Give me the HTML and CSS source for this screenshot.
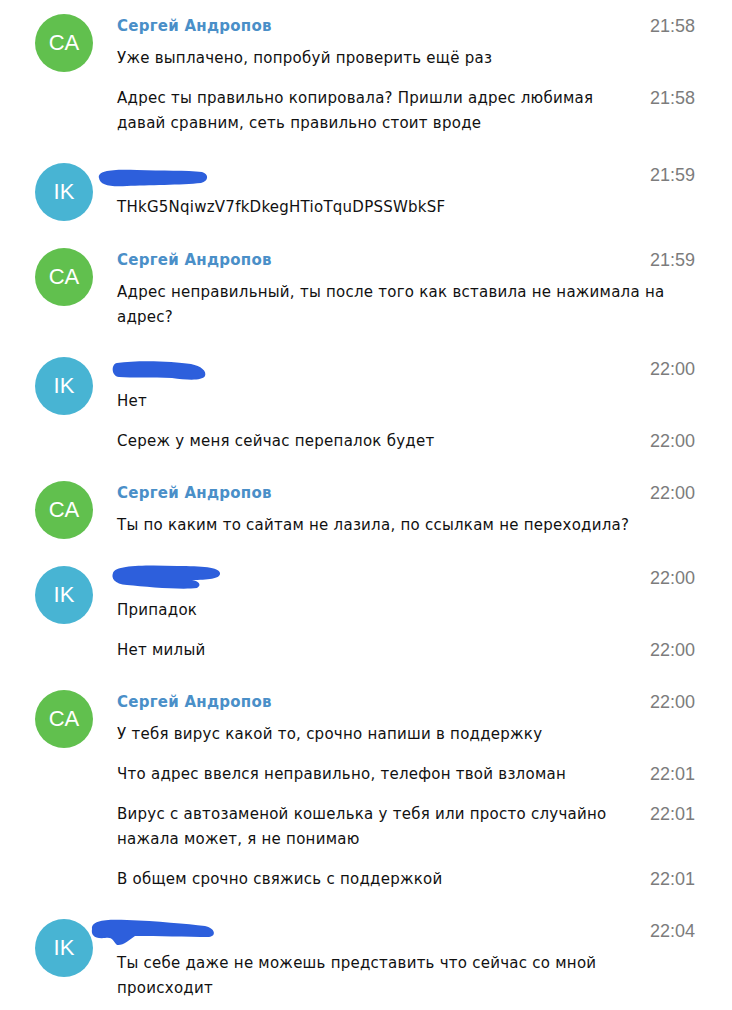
FILE: index.html
```html
<!DOCTYPE html>
<html lang="ru">
<head>
    <meta charset="UTF-8">
    <title>Чат</title>
    <link rel="stylesheet" href="styles.css">
</head>
<body>
    <div class="chat">
        <div class="group">
            <div class="avatar ca">CA</div>
            <div class="body">
                <div class="head"><span class="name">Сергей Андропов</span><span class="time">21:58</span></div>
                <div class="msg first"><span class="text">Уже выплачено, попробуй проверить ещё раз</span></div>
                <div class="msg"><span class="text">Адрес ты правильно копировала? Пришли адрес любимая давай сравним, сеть правильно стоит вроде</span><span class="time">21:58</span></div>
            </div>
        </div>

        <div class="group">
            <div class="avatar ik">IK</div>
            <div class="body">
                <div class="head">
                    <svg class="scribble" viewBox="0 0 140 30"><path d="M12 17 C10 9 28 8 50 9 C75 10 100 9 115 11 C122 13 122 20 114 22 C95 24 60 24 40 25 C22 26 13 24 12 17 Z"/></svg>
                    <span class="time">21:59</span>
                </div>
                <div class="msg first"><span class="text">THkG5NqiwzV7fkDkegHTioTquDPSSWbkSF</span></div>
            </div>
        </div>

        <div class="group">
            <div class="avatar ca">CA</div>
            <div class="body">
                <div class="head"><span class="name">Сергей Андропов</span><span class="time">21:59</span></div>
                <div class="msg first"><span class="text">Адрес неправильный, ты после того как вставила не нажимала на адрес?</span></div>
            </div>
        </div>

        <div class="group">
            <div class="avatar ik">IK</div>
            <div class="body">
                <div class="head">
                    <svg class="scribble" viewBox="0 0 140 30"><path d="M30 8 C50 5 85 6 104 9 C114 11 120 16 118 21 C115 26 100 25 85 23 C65 22 45 23 32 22 C24 21 24 9 30 8 Z"/></svg>
                    <span class="time">22:00</span>
                </div>
                <div class="msg first"><span class="text">Нет</span></div>
                <div class="msg"><span class="text">Сереж у меня сейчас перепалок будет</span><span class="time">22:00</span></div>
            </div>
        </div>

        <div class="group">
            <div class="avatar ca">CA</div>
            <div class="body">
                <div class="head"><span class="name">Сергей Андропов</span><span class="time">22:00</span></div>
                <div class="msg first"><span class="text">Ты по каким то сайтам не лазила, по ссылкам не переходила?</span></div>
            </div>
        </div>

        <div class="group">
            <div class="avatar ik">IK</div>
            <div class="body">
                <div class="head">
                    <svg class="scribble" viewBox="0 0 140 30"><path d="M26 9 C28 1 60 1 90 2 C115 2 132 3 133 9 C134 15 120 16 105 16 C112 17 115 21 110 24 C95 26 60 23 40 21 C27 20 24 14 26 9 Z"/></svg>
                    <span class="time">22:00</span>
                </div>
                <div class="msg first"><span class="text">Припадок</span></div>
                <div class="msg"><span class="text">Нет милый</span><span class="time">22:00</span></div>
            </div>
        </div>

        <div class="group">
            <div class="avatar ca">CA</div>
            <div class="body">
                <div class="head"><span class="name">Сергей Андропов</span><span class="time">22:00</span></div>
                <div class="msg first"><span class="text">У тебя вирус какой то, срочно напиши в поддержку</span></div>
                <div class="msg"><span class="text">Что адрес ввелся неправильно, телефон твой взломан</span><span class="time">22:01</span></div>
                <div class="msg"><span class="text">Вирус с автозаменой кошелька у тебя или просто случайно нажала может, я не понимаю</span><span class="time">22:01</span></div>
                <div class="msg"><span class="text">В общем срочно свяжись с поддержкой</span><span class="time">22:01</span></div>
            </div>
        </div>

        <div class="group">
            <div class="avatar ik">IK</div>
            <div class="body">
                <div class="head">
                    <svg class="scribble" viewBox="0 0 140 30"><path d="M5 12 C4 3 20 2 40 3 C70 4 100 7 118 9 C128 11 130 19 122 20 C100 20 70 19 48 19 C42 23 36 29 30 28 C25 23 26 20 18 21 C7 22 4 18 5 12 Z"/></svg>
                    <span class="time">22:04</span>
                </div>
                <div class="msg first"><span class="text">Ты себе даже не можешь представить что сейчас со мной происходит</span></div>
            </div>
        </div>
    </div>
</body>
</html>
```

FILE: styles.css
```css
body {
    margin: 0;
    background-color: #fff;
    font-family: "DejaVu Sans", sans-serif;
    font-size: 15px;
    letter-spacing: 0.25px;
    color: #111;
}
.chat {
    padding: 14px 37px 0 35px;
}
.group {
    display: grid;
    grid-template-columns: 58px 1fr;
    column-gap: 24px;
    align-items: start;
    margin-bottom: 27px;
}
.avatar {
    width: 58px;
    height: 58px;
    border-radius: 50%;
    color: #fff;
    font-family: "Liberation Sans", sans-serif;
    font-size: 22px;
    letter-spacing: 0;
    display: flex;
    justify-content: center;
    align-items: center;
}
.avatar.ca {
    background-color: #61c04e;
}
.avatar.ik {
    background-color: #48b4d3;
}
.head, .msg {
    display: flex;
    justify-content: space-between;
    align-items: flex-start;
    line-height: 25px;
}
.head {
    height: 25px;
}
.name {
    font-weight: bold;
    color: #4a8fc8;
}
.msg {
    margin-top: 15px;
}
.msg.first {
    margin-top: 7px;
}
.msg .text {
    max-width: 505px;
}
.msg.first .text {
    max-width: 548px;
}
.time {
    font-family: "Liberation Sans", sans-serif;
    font-size: 18px;
    letter-spacing: 0;
    color: #7c7c7c;
    margin-left: auto;
}
.scribble {
    display: block;
    width: 140px;
    height: 30px;
    margin: -2.5px 0 0 -30px;
}
.scribble path {
    fill: #2d5fdc;
}
```
